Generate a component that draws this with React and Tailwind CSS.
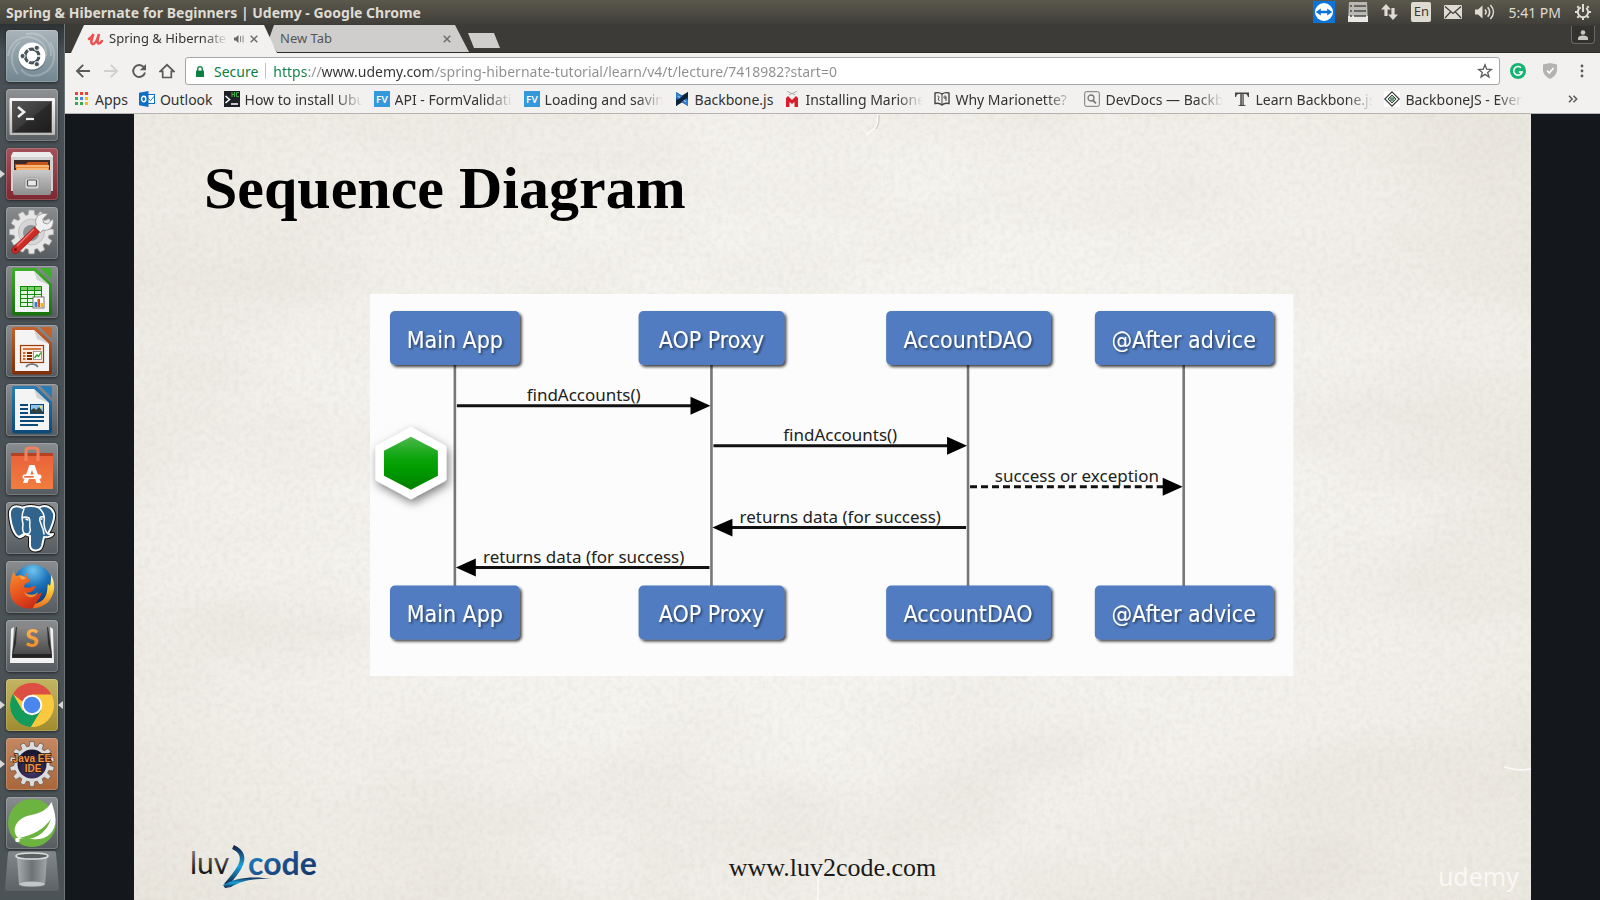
import { useState } from "react";

const cog = (teeth, outer, inner, cx, cy, width = 0.5) => {
  const pts = [];
  const step = (Math.PI * 2) / teeth;
  for (let i = 0; i < teeth; i++) {
    const a = i * step - Math.PI / 2;
    const half = (step * width) / 2;
    [
      [inner, a - half * 1.35],
      [outer, a - half * 0.85],
      [outer, a + half * 0.85],
      [inner, a + half * 1.35],
    ].forEach(([r, t]) => pts.push(`${(cx + r * Math.cos(t)).toFixed(2)},${(cy + r * Math.sin(t)).toFixed(2)}`));
  }
  return pts.join(" ");
};

function DashIcon() {
  return (
    <svg viewBox="0 0 52 52" className="size-full">
      <g fill="none" stroke="#fff" strokeWidth="2" opacity=".22">
        <path d="M2 26C4 12 16 4 27 8c10 3 14 10 13 18" />
        <path d="M44 12c8 13 4 27-8 32-9 4-17 1-21-5" />
        <path d="M12 44C3 34 4 19 14 12" />
        <path d="M20 4c15-3 26 8 25 22" />
      </g>
      <circle cx="26" cy="27" r="14" fill="#35424a" opacity=".35" />
      <circle cx="26" cy="26" r="13.6" fill="#fff" />
      <circle cx="26" cy="26" r="6.9" fill="none" stroke="#4a555b" strokeWidth="3.2" />
      <g stroke="#fff" strokeWidth="1.2">
        <path d="M26 26h-10M26 26l5-8.7M26 26l5 8.7" strokeWidth="1.3" transform="rotate(60 26 26)" />
      </g>
      <circle cx="26" cy="26" r="5.2" fill="#fff" />
      <g fill="#4a555b" stroke="#fff" strokeWidth="1">
        <circle cx="16.6" cy="26" r="2.6" />
        <circle cx="30.8" cy="17.8" r="2.6" />
        <circle cx="30.8" cy="34.2" r="2.6" />
      </g>
    </svg>
  );
}

function TerminalIcon() {
  return (
    <svg viewBox="0 0 52 52" className="size-full">
      <defs>
        <linearGradient id="term-frame" x2="0" y2="1">
          <stop stopColor="#fafafa" />
          <stop offset="1" stopColor="#b9b9b9" />
        </linearGradient>
        <linearGradient id="term-screen" x2="1" y2="1">
          <stop stopColor="#555" />
          <stop offset=".5" stopColor="#3a3a3a" />
          <stop offset=".52" stopColor="#2a2a2a" />
          <stop offset="1" stopColor="#1d1d1d" />
        </linearGradient>
      </defs>
      <rect x="3.5" y="9" width="45.500" height="37" rx="1" fill="url(#term-frame)" />
      <rect x="6" y="12" width="40" height="32" fill="#555" />
      <rect x="7" y="13" width="38" height="30" fill="url(#term-screen)" />
      <path d="M12 18l6 5-6 5" fill="none" stroke="#eee" strokeWidth="2.6" />
      <path d="M20 30h8" stroke="#eee" strokeWidth="2.2" />
    </svg>
  );
}

function FilesIcon() {
  return (
    <svg viewBox="0 0 52 52" className="size-full">
      <defs>
        <linearGradient id="files-body" x2="0" y2="1">
          <stop stopColor="#c9c9c9" />
          <stop offset="1" stopColor="#8e8e8e" />
        </linearGradient>
      </defs>
      <path d="M7 4h37l3 4v5H5V8z" fill="#ececec" />
      <rect x="5" y="9" width="42" height="34" fill="#d2d2d2" />
      <rect x="8" y="12" width="36" height="14" fill="#3b2a26" />
      <path d="M9 16h11l2-2h20v6H9z" fill="#c8551a" />
      <path d="M10 17h33v8H10z" fill="#f0903c" />
      <path d="M10 18h33M11 21h31" stroke="#fbe0b8" strokeWidth="1.2" />
      <path d="M7 22h38v23a2 2 0 0 1-2 2H9a2 2 0 0 1-2-2z" fill="url(#files-body)" />
      <rect x="19" y="30" width="14" height="11" rx="2.500" fill="#d5d5d5" stroke="#8a8a8a" strokeWidth=".6" />
      <rect x="21.500" y="32" width="9" height="6" rx="1" fill="#e9e9e9" stroke="#555" strokeWidth="1.200" />
    </svg>
  );
}

function SettingsIcon() {
  return (
    <svg viewBox="0 0 52 52" className="size-full">
      <polygon points={cog(12, 22, 17.5, 25.5, 25, 0.52)} fill="#e6e6e6" stroke="#b5b5b5" strokeWidth=".7" />
      <circle cx="25.500" cy="25" r="13" fill="#d6d6d6" stroke="#c0c0c0" />
      <circle cx="25" cy="26" r="8" fill="#8f9295" />
      <path
        d="M29 21l5 5 3-3c4 1 9-1 10-6 .6-2 .3-4-.3-5l-5 5-4-1-1-4 5-5c-5-2-11 1-12 6-.3 2 0 3 .6 4z"
        fill="#efefef"
        stroke="#8b8b8b"
        strokeWidth=".8"
      />
      <path d="M28.500 20l5 5L12 45.500c-1.500 1.500-4 1.500-5.300 0s-1.300-3.700.2-5z" fill="#cc2b26" stroke="#8c1512" strokeWidth=".7" />
      <path d="M28 22L11 39" stroke="#f07a70" strokeWidth="1.500" />
      <circle cx="9.500" cy="42.500" r="1.500" fill="#7a0f0d" />
    </svg>
  );
}

function OfficeIcon({ id, dark, light, children }) {
  return (
    <svg viewBox="0 0 52 52" className="size-full">
      <defs>
        <linearGradient id={id} x2="0" y2="1">
          <stop stopColor={light} />
          <stop offset="1" stopColor={dark} />
        </linearGradient>
      </defs>
      <path d="M8 2h22l16 16v29a2.500 2.500 0 0 1-2.500 2.500h-35A2.500 2.500 0 0 1 6 47V4a2 2 0 0 1 2-2z" fill={`url(#${id})`} />
      <path d="M34 2h10a2 2 0 0 1 2 2v10z" fill={light} />
      <path d="M9 5h19l15 14v27H9z" fill="#f4f4f4" />
      <path d="M28 5l15 14-12-5z" fill="#cfd3d3" />
      {children}
    </svg>
  );
}

function CalcIcon() {
  return (
    <OfficeIcon id="calc" dark="#16700c" light="#3fae2c">
      <rect x="14" y="20" width="22" height="21" fill="#118a0a" />
      {[0, 1, 2].map((c) =>
        [0, 1, 2, 3, 4].map((r) => (
          <rect key={`${c}${r}`} x={15 + c * 7} y={21 + r * 4} width="6" height="3" fill={r ? "#e3f6df" : "#7bd06b"} />
        )),
      )}
      <rect x="27" y="31" width="11" height="11" fill="#fff" stroke="#555" strokeWidth=".8" />
      <path d="M28.500 36h2.500v5h-2.500z" fill="#2f7fd0" />
      <path d="M31.500 33H34v8h-2.500z" fill="#d9541e" />
      <path d="M34.500 37H37v4h-2.500z" fill="#f2b41c" />
    </OfficeIcon>
  );
}

function ImpressIcon() {
  return (
    <OfficeIcon id="impress" dark="#7e2f06" light="#c4622e">
      <rect x="14.500" y="20.500" width="23" height="17" fill="#fbe9de" stroke="#9c3c0b" strokeWidth="1.200" />
      <path d="M17 24h18" stroke="#d06a31" strokeWidth="1.800" />
      <path d="M17 28h2.500M17 31h2.500M17 34h2.500" stroke="#d06a31" strokeWidth="1.800" />
      <path d="M21 28h5M21 31h5M21 34h5" stroke="#7e2f06" strokeWidth="1.800" />
      <rect x="27.500" y="26.500" width="8" height="8" fill="#fff" stroke="#777" strokeWidth=".7" />
      <path d="M28.500 33l2.500-3 1.500 1.500 2.500-4" fill="none" stroke="#2f9a2a" strokeWidth="1.300" />
      <path d="M26 38v2M20 42c2-3 4-3 6-3s4 0 6 3" fill="none" stroke="#777" strokeWidth="1.500" />
    </OfficeIcon>
  );
}

function WriterIcon() {
  return (
    <OfficeIcon id="writer" dark="#0a4a78" light="#2b7cb5">
      <path d="M14 21h8M14 25h8M14 29h8M14 33h24M14 37h24M14 41h18" stroke="#0d4a78" strokeWidth="1.900" />
      <rect x="24.500" y="20.500" width="13" height="9" fill="#8cc4ee" stroke="#0d4a78" />
      <path d="M25 29v-3l3-2 2 2 3-3 4 5v1z" fill="#33403c" />
      <circle cx="35" cy="23" r="1.300" fill="#f6e26a" />
    </OfficeIcon>
  );
}

function SoftwareIcon() {
  return (
    <svg viewBox="0 0 52 52" className="size-full">
      <defs>
        <linearGradient id="bag" x2="0" y2="1">
          <stop stopColor="#e9633a" />
          <stop offset="1" stopColor="#f27d3e" />
        </linearGradient>
      </defs>
      <path d="M5 10l4 4h34l4-4v36H5z" fill="url(#bag)" />
      <path d="M5 10h42v3H5z" fill="#b7421f" />
      <path d="M5 13h42v33H5z" fill="url(#bag)" />
      <path d="M20 18V8c0-2 1-3 3-3h6c2 0 3 1 3 3v10" fill="none" stroke="#ef8260" strokeWidth="3" />
      <path d="M17 40l6.500-18h5L35 40h-4.500L26 27l-4.500 13z" fill="#fff" />
      <rect x="16.500" y="31.500" width="19" height="4.600" rx="2" fill="#fff" />
      <rect x="18" y="33" width="10" height="1.800" rx=".8" fill="#ee6f3a" />
    </svg>
  );
}

function PostgresIcon() {
  return (
    <svg viewBox="0 0 52 52" className="size-full">
      <g strokeLinejoin="round" strokeLinecap="round">
        <path
          d="M17 6C9 2 3 5 4 14c1 9 4 19 9 21 3 1 5-2 6-3l5 2v10c1 6 10 6 12 0l2-9c4 1 8-1 9-3-2 .5-4 .3-5-.5 4-6 7-16 6-20-2-7-9-9-15-6-5-2-12-2-16 0z"
          fill="#31648c"
          stroke="#111"
          strokeWidth="4"
        />
        <path
          d="M17 6C9 2 3 5 4 14c1 9 4 19 9 21 3 1 5-2 6-3l5 2v10c1 6 10 6 12 0l2-9c4 1 8-1 9-3-2 .5-4 .3-5-.5 4-6 7-16 6-20-2-7-9-9-15-6-5-2-12-2-16 0z"
          fill="#31648c"
          stroke="#fff"
          strokeWidth="2"
        />
        <path d="M18 7c-3 6-2 11-1 15 0 4-2 7 2 10 4 1 6-2 5-6-1-3 1-7-1-10-2-1-5-1-7 0" fill="none" stroke="#fff" strokeWidth="1.500" />
        <path d="M32 5c5 4 7 10 6 15 0 3 0 7 3 11M38 15c-3-1-5 0-4 4 1 3 2 6 3 8l1 5" fill="none" stroke="#fff" strokeWidth="1.500" />
        <path d="M20 17l2 1M35 17l1 0M14 34c2-1 4-2 4-3" stroke="#fff" strokeWidth="1.600" />
      </g>
    </svg>
  );
}

function FirefoxIcon() {
  return (
    <svg viewBox="0 0 52 52" className="size-full">
      <defs>
        <radialGradient id="fx-globe" cx=".5" cy=".15" r=".9">
          <stop stopColor="#6fc4ee" />
          <stop offset=".45" stopColor="#1d74ba" />
          <stop offset="1" stopColor="#0b2f6b" />
        </radialGradient>
        <linearGradient id="fx-body" x1=".2" y1="0" x2=".7" y2="1">
          <stop stopColor="#f58a2c" />
          <stop offset=".5" stopColor="#e8551f" />
          <stop offset="1" stopColor="#c62a16" />
        </linearGradient>
        <linearGradient id="fx-tail" x2="0" y2="1">
          <stop stopColor="#fff6a8" />
          <stop offset=".4" stopColor="#fbd43b" />
          <stop offset="1" stopColor="#ec6a1c" />
        </linearGradient>
      </defs>
      <circle cx="27" cy="23" r="19.500" fill="url(#fx-globe)" />
      <path
        d="M45 14c5 8 4 19-2 26C36 48 22 50 13 43c13 3 24-1 27-9 2-5 1-8 2-11l2 2c1-4 1-7 1-11z"
        fill="url(#fx-tail)"
      />
      <path
        d="M8 10c0 3 1 4 2 5 3-1 6-1 8 1l3-4c-1 4 0 6 3 6l-1 3c-2 1-5 2-5 5 4 2 6 0 12-1-2 5-6 7-10 7 4 3 10 3 16-1-2 8-8 12-9 16-9 2-18-2-22-11C3 28 4 18 8 10z"
        fill="url(#fx-body)"
      />
      <path d="M13 15c3-1 5 0 7 3-2 0-3 0-4 1" fill="#f8a548" />
      <path d="M18 31c5 4 11 3 14 0-2 6-11 8-14 0z" fill="#f9a03c" opacity=".8" />
    </svg>
  );
}

function SublimeIcon() {
  return (
    <svg viewBox="0 0 52 52" className="size-full">
      <defs>
        <linearGradient id="key-top" x2="0" y2="1">
          <stop stopColor="#8b8b8b" />
          <stop offset="1" stopColor="#4a4a4a" />
        </linearGradient>
        <linearGradient id="key-s" x2="0" y2="1">
          <stop stopColor="#ffc266" />
          <stop offset="1" stopColor="#ee8119" />
        </linearGradient>
      </defs>
      <path d="M5 9l3-2-2 31h40L44 7l3 2 1 34H4z" fill="#f1f1f1" />
      <path d="M10 7h32l4 28v3H6v-3z" fill="#2f2f2f" />
      <path d="M11 6h30l1 18 3 10H7l3-10z" fill="url(#key-top)" />
      <path d="M7 34h38v3H7z" fill="#232323" />
      <text x="26" y="27" textAnchor="middle" fontFamily="Lato, sans-serif" fontWeight="900" fontSize="24" fill="url(#key-s)">
        S
      </text>
    </svg>
  );
}

function ChromeIcon() {
  return (
    <svg viewBox="0 0 52 52" className="size-full">
      <circle cx="26" cy="26" r="22" fill="#fbc93d" />
      <path d="M26 26L7 15A22 22 0 0 1 45.100 15H26z" fill="#dd4b3e" />
      <path d="M7 15a22 22 0 0 0 18 33l10.500-17L26 26l-9.500 5.500z" fill="#149a5b" />
      <path d="M26 15.500h19A22 22 0 0 1 25 48l10-16.500z" fill="#fbc93d" />
      <path d="M26 4a22 22 0 0 1 19.100 11.500H26a10.500 10.500 0 0 0-9.700 7L7 15A22 22 0 0 1 26 4z" fill="#dd4f43" />
      <circle cx="26" cy="26" r="10.200" fill="#fff" />
      <circle cx="26" cy="26" r="8.300" fill="#4a86ee" />
    </svg>
  );
}

function EclipseIcon() {
  return (
    <svg viewBox="0 0 52 52" className="size-full">
      <defs>
        <radialGradient id="jee" cx=".5" cy=".7" r=".6">
          <stop stopColor="#4b3f78" />
          <stop offset="1" stopColor="#1a1730" />
        </radialGradient>
      </defs>
      <polygon points={cog(14, 22.5, 18, 26, 26, 0.5)} fill="#dcdcdc" stroke="#6b5a50" strokeWidth=".8" />
      <circle cx="26" cy="26" r="14.500" fill="url(#jee)" />
      <g fontFamily="'Liberation Sans', sans-serif" fontWeight="700" fontSize="10" textAnchor="middle" fill="#f0964a" stroke="#2b1508" strokeWidth="1.500" paintOrder="stroke">
        <text x="26" y="24">Java EE</text>
        <text x="27" y="34">IDE</text>
      </g>
    </svg>
  );
}

function SpringIcon() {
  return (
    <svg viewBox="0 0 52 52" className="size-full">
      <circle cx="26" cy="26" r="24" fill="#6db33f" />
      <path
        d="M45.500 5c1.500 5 4 11 4 18 0 13-10 21-24 19-5-.7-8-.5-12 0C4 35 9 21 25 18c10-2 16-5 20.500-13z"
        fill="#fff"
      />
      <path d="M13 41c14-3 24-8 32-19-4 12-13 20-25 20z" fill="#6db33f" />
      <circle cx="11.500" cy="43" r="2.300" fill="#fff" />
    </svg>
  );
}

function TrashIcon() {
  return (
    <svg viewBox="0 0 54 40" className="w-[54px]">
      <defs>
        <linearGradient id="trash-tile" x2="0" y2="1">
          <stop stopColor="#83888b" />
          <stop offset="1" stopColor="#5c6265" />
        </linearGradient>
        <linearGradient id="trash-can">
          <stop stopColor="#a9adaf" />
          <stop offset=".5" stopColor="#6d7275" />
          <stop offset="1" stopColor="#a1a5a7" />
        </linearGradient>
      </defs>
      <path d="M5 0h44a2 2 0 0 1 2 2l3 35a3 3 0 0 1-3 3H3a3 3 0 0 1-3-3L3 2a2 2 0 0 1 2-2z" fill="url(#trash-tile)" />
      <path d="M12 6h30l-2 28c-6 3-20 3-26 0z" fill="url(#trash-can)" />
      <ellipse cx="27" cy="33" rx="12.500" ry="2.500" fill="#c3c6c6" />
      <ellipse cx="27" cy="5" rx="16" ry="3" fill="#5c6163" stroke="#dedfdf" strokeWidth="1.500" />
    </svg>
  );
}

const apps = [
  { name: "Search your computer", icon: DashIcon, tile: "from-[#a9b4ba] to-[#738791]" },
  { name: "Terminal", icon: TerminalIcon, tile: "from-[#8f9193] to-[#5a6063]" },
  { name: "Files", icon: FilesIcon, tile: "from-[#a3525c] to-[#7d2731]", running: true },
  { name: "System Settings", icon: SettingsIcon, tile: "from-[#8a8d90] to-[#555b5f]" },
  { name: "LibreOffice Calc", icon: CalcIcon, tile: "from-[#8a8d90] to-[#555b5f]" },
  { name: "LibreOffice Impress", icon: ImpressIcon, tile: "from-[#8a8d90] to-[#555b5f]" },
  { name: "LibreOffice Writer", icon: WriterIcon, tile: "from-[#8a8d90] to-[#555b5f]" },
  { name: "Ubuntu Software", icon: SoftwareIcon, tile: "from-[#8a8d90] to-[#555b5f]" },
  { name: "pgAdmin", icon: PostgresIcon, tile: "from-[#8a8d90] to-[#555b5f]" },
  { name: "Firefox", icon: FirefoxIcon, tile: "from-[#8a8d90] to-[#555b5f]" },
  { name: "Sublime Text", icon: SublimeIcon, tile: "from-[#8a8d90] to-[#555b5f]" },
  { name: "Google Chrome", icon: ChromeIcon, tile: "from-[#c3b562] to-[#a08c2e]", running: true, focused: true },
  { name: "Eclipse", icon: EclipseIcon, tile: "from-[#c4875f] to-[#a8663a]", running: true },
  { name: "Spring Tool Suite", icon: SpringIcon, tile: "from-[#8a8d90] to-[#555b5f]" },
];

function Launcher() {
  return (
    <nav aria-label="Launcher" className="flex w-[65px] shrink-0 flex-col items-center gap-0.5 border-r border-[#6f7678] bg-linear-to-b from-[#2d3234] via-[#485055] via-3% to-[#4b5357] pt-1.5 pr-px">
      <ul className="flex w-full flex-col gap-[7px]">
        {apps.map(({ name, icon: Icon, tile, running, focused }) => (
          <li key={name} className="relative flex justify-center">
            {running && (
              <span className="absolute top-1/2 left-0 -translate-y-1/2 border-y-4 border-l-5 border-y-transparent border-l-[#d8d8d8]" />
            )}
            <button
              type="button"
              aria-label={name}
              className={`size-[52px] rounded-[4px] bg-linear-to-b shadow-[0_1px_3px_#0008,inset_0_0_0_1px_#ffffff30] ${tile}`}
            >
              <Icon />
            </button>
            {focused && (
              <span className="absolute top-1/2 right-0 -translate-y-1/2 border-y-4 border-r-5 border-y-transparent border-r-[#d8d8d8]" />
            )}
          </li>
        ))}
      </ul>
      <button type="button" aria-label="Trash">
        <TrashIcon />
      </button>
    </nav>
  );
}

function TopPanel() {
  return (
    <header className="flex h-6 items-center justify-between bg-linear-to-b from-[#5b584c] to-[#403f3a] pr-2 pl-1.5 text-[#dfdbd2]">
      <h1 className="text-[14px] font-bold whitespace-nowrap">Spring &amp; Hibernate for Beginners | Udemy - Google Chrome</h1>
      <div className="flex items-center gap-[13px]">
        <svg viewBox="0 0 22 22" className="size-[22px]">
          <rect width="22" height="22" fill="#0b74d8" />
          <circle cx="11" cy="11" r="9" fill="#fff" />
          <path d="M2.800 11l5-3.600v2.400h6.400V7.400l5 3.600-5 3.600v-2.400H7.800v2.400z" fill="#0b74d8" />
        </svg>
        <svg viewBox="0 0 20 20" className="size-5">
          <path d="M1 0h18l1 20H0z" fill="#b9b8b4" />
          <path d="M0 14h20v6H0z" fill="#e9e8e4" />
          <path d="M2 4h2M6 4h12M2 9h2M6 9h12M2 14h2M6 14h12" stroke="#4a4a46" strokeWidth="1.400" />
        </svg>
        <svg viewBox="0 0 17 18" className="h-[18px] w-[17px]" fill="currentColor">
          <path d="M5 1L0 6.500h3.400V13h3.200V6.500H10zM12 17l5-5.500h-3.400V5h-3.200v6.500H7z" />
        </svg>
        <span className="flex h-5 w-5 items-center justify-center rounded-[2px] bg-[#dfdbd2] text-[13px] text-[#3c3b37]">En</span>
        <svg viewBox="0 0 18 14" className="h-3.5 w-[18px]">
          <rect width="18" height="14" rx="1" fill="#dfdbd2" />
          <path d="M1 1.500l8 7 8-7M1 13l5.500-6M17 13l-5.500-6" fill="none" stroke="#3c3b37" strokeWidth="1.200" />
        </svg>
        <svg viewBox="0 0 20 18" className="h-[18px] w-5">
          <path d="M0 6.500h3L7.500 2.500v13L3 11.500H0z" fill="#dfdbd2" />
          <path d="M10 6.500c1.300 1.500 1.300 3.500 0 5M12.700 4.300c2.500 3 2.500 6.400 0 9.400M15.400 2c4 4.300 4 9.700 0 14" fill="none" stroke="#dfdbd2" strokeWidth="1.600" />
        </svg>
        <time className="text-[14px] whitespace-nowrap">5:41 PM</time>
        <svg viewBox="0 0 18 18" className="size-[18px]" fill="none" stroke="#dfdbd2">
          <circle cx="9" cy="9" r="5.200" strokeWidth="2" strokeDasharray="27 5.700" strokeDashoffset="-27.300" />
          <path d="M9 1v8" strokeWidth="2" />
          <path d="M3.300 3.300l1.500 1.500M14.700 3.300l-1.500 1.500M1 9h2.500M14.500 9H17M3.300 14.700l1.500-1.500M14.700 14.700l-1.500-1.500M9 14.500V17" strokeWidth="2" />
        </svg>
      </div>
    </header>
  );
}

function TabClose({ label }) {
  return (
    <button type="button" aria-label={label} className="text-[#6e6e6e]">
      <svg viewBox="0 0 8 8" className="size-2">
        <path d="M.7.7l6.600 6.600M7.300.7L.7 7.300" stroke="currentColor" strokeWidth="1.500" />
      </svg>
    </button>
  );
}

function TabStrip() {
  return (
    <div className="flex h-[29px] items-end border-b border-[#2b2a27] bg-[#3c3b37] pl-1.5">
      <div role="tablist" className="flex">
        <div
          role="tab"
          aria-selected="true"
          className="z-10 -mb-px flex h-7 w-[206px] items-center gap-1.5 bg-[#f2f1f0] pr-[19px] pb-px pl-4 text-[13px] text-[#333] [clip-path:polygon(0_100%,13px_0,193px_0,100%_100%)]"
        >
          <svg viewBox="0 0 16 14" className="h-3.5 w-4 shrink-0">
            <path d="M2 7c2-1 3.500-3 4.500-5C5 6 3 11.500 5.500 12s5-5 6.500-10c-1 4-2.500 9-.5 9.500 1.500.300 2.500-1 3.500-2.500" fill="none" stroke="#ec5252" strokeWidth="2.600" strokeLinecap="round" />
          </svg>
          <span className="flex-1 overflow-hidden whitespace-nowrap [mask-image:linear-gradient(to_right,#000_80%,transparent)]">
            Spring &amp; Hibernate
          </span>
          <svg viewBox="0 0 10 8" className="h-2 w-2.5 shrink-0">
            <path d="M0 2.500h1.800L4.500 0v8L1.800 5.500H0z" fill="#666" />
            <path d="M6.500 1v6M9 .5v7" stroke="#888" />
          </svg>
          <TabClose label="Close Spring & Hibernate" />
        </div>
        <div
          role="tab"
          aria-selected="false"
          className="-ml-2 flex h-[27px] w-[200px] items-center justify-between bg-[#cfcecc] pr-[18px] pl-[11px] text-[13px] text-[#555] [clip-path:polygon(5px_0,186px_0,100%_100%,8px_100%,0_14px)]"
        >
          New Tab
          <TabClose label="Close New Tab" />
        </div>
      </div>
      <button
        type="button"
        aria-label="New tab"
        className="mb-1 -ml-px h-[15px] w-8 bg-[#cfcecc] [clip-path:polygon(0_0,26px_0,100%_100%,6px_100%)]"
      />
      <button
        type="button"
        aria-label="Profile"
        className="mr-[5px] mb-2 ml-auto flex h-[18px] w-6 items-center justify-center rounded-b-[4px] border border-t-0 border-[#6a6963] bg-[#33322f] text-[#c9c6be]"
      >
        <svg viewBox="0 0 10 10" className="size-2.5" fill="currentColor">
          <circle cx="5" cy="2.500" r="2.300" />
          <path d="M0 10V8c0-1.500 2-2.500 5-2.500s5 1 5 2.500v2z" />
        </svg>
      </button>
    </div>
  );
}

function Toolbar() {
  const [url, setUrl] = useState("https://www.udemy.com/spring-hibernate-tutorial/learn/v4/t/lecture/7418982?start=0");
  return (
    <div className="flex h-9 items-center bg-[#f2f1f0] px-2.5 text-[#5a5a5a]">
      <div className="flex gap-3">
        <button type="button" aria-label="Back">
          <svg viewBox="0 0 16 16" className="size-4" fill="none" stroke="currentColor" strokeWidth="1.900">
            <path d="M15 8H2.500M8.200 1.800L2 8l6.200 6.200" />
          </svg>
        </button>
        <button type="button" aria-label="Forward" disabled className="text-[#cfcfcf]">
          <svg viewBox="0 0 16 16" className="size-4" fill="none" stroke="currentColor" strokeWidth="1.900">
            <path d="M1 8h12.500M7.800 1.800L14 8l-6.200 6.200" />
          </svg>
        </button>
        <button type="button" aria-label="Reload">
          <svg viewBox="0 0 16 16" className="size-4" fill="none" stroke="currentColor" strokeWidth="1.900">
            <path d="M12.800 4.200A6 6 0 1 0 14 9.500" />
            <path d="M15 1v6.200H8.800z" fill="currentColor" stroke="none" />
          </svg>
        </button>
        <button type="button" aria-label="Home">
          <svg viewBox="0 0 16 16" className="size-4" fill="none" stroke="currentColor" strokeWidth="1.700">
            <path d="M1.200 8.300L8 1.800l6.800 6.500h-2.500V14.500H3.700V8.300z" />
          </svg>
        </button>
      </div>
      <form className="ml-2.5 flex h-7 flex-1 items-center rounded-[3px] border border-[#a6a6a6] bg-white pr-1.5 pl-2.5 text-[14px]" onSubmit={(e) => e.preventDefault()}>
        <svg viewBox="0 0 8 11" className="h-[11px] w-2">
          <rect y="4.500" width="8" height="6.500" rx=".6" fill="#0b8043" />
          <path d="M1.700 5V3a2.300 2.300 0 0 1 4.600 0v2" fill="none" stroke="#0b8043" strokeWidth="1.300" />
        </svg>
        <label htmlFor="address" className="ml-2.5 text-[#0b8043]">Secure</label>
        <span className="mx-[7px] h-4 w-px bg-[#c4c4c4]" />
        <input
          id="address"
          value={url}
          onChange={(e) => setUrl(e.target.value)}
          className="min-w-0 flex-1 bg-clip-text text-transparent caret-[#333] outline-none [background-image:linear-gradient(to_right,#0b8043_34px,#8e8e8e_34px,#8e8e8e_48px,#333_48px,#333_159px,#8e8e8e_159px)]"
        />
        <button type="button" aria-label="Bookmark this page">
          <svg viewBox="0 0 16 16" className="size-4" fill="none" stroke="#5a5a5a" strokeWidth="1.300">
            <path d="M8 1.800l1.700 4.400 4.700.300-3.700 2.900 1.300 4.600L8 11.400 4 14l1.300-4.600L1.600 6.500l4.700-.3z" />
          </svg>
        </button>
      </form>
      <div className="ml-2.5 flex items-center gap-4">
        <button type="button" aria-label="Grammarly">
          <svg viewBox="0 0 16 16" className="size-4">
            <circle cx="8" cy="8" r="8" fill="#15b371" />
            <path d="M11 4.700A4.300 4.300 0 1 0 12.200 9H8.800" fill="none" stroke="#fff" strokeWidth="1.500" />
          </svg>
        </button>
        <button type="button" aria-label="AdGuard">
          <svg viewBox="0 0 16 16" className="size-4">
            <path d="M8 0l7 1.500V7c0 4-3 7-7 9-4-2-7-5-7-9V1.500z" fill="#b3b3b3" />
            <path d="M5 7.500l2.300 2.500L11.500 5" fill="none" stroke="#fff" strokeWidth="1.600" />
          </svg>
        </button>
        <button type="button" aria-label="Menu">
          <svg viewBox="0 0 16 16" className="size-4" fill="#5a5a5a">
            <circle cx="8" cy="3" r="1.400" />
            <circle cx="8" cy="8" r="1.400" />
            <circle cx="8" cy="13" r="1.400" />
          </svg>
        </button>
      </div>
    </div>
  );
}

const AppsGrid = () => (
  <svg viewBox="0 0 16 16" className="size-4 shrink-0">
    {["#ea4335", "#ea4335", "#ea4335", "#34a853", "#4285f4", "#fbbc05", "#34a853", "#34a853", "#fbbc05"].map((c, i) => (
      <rect key={i} x={1 + (i % 3) * 5} y={1 + Math.floor(i / 3) * 5} width="3" height="3" fill={c} />
    ))}
  </svg>
);
const Outlook = () => (
  <svg viewBox="0 0 16 16" className="size-4 shrink-0">
    <rect x="8" y="3.500" width="7.500" height="9" fill="#fff" stroke="#0f6fc5" />
    <path d="M8.500 7l3 2.500L15.500 5" fill="none" stroke="#0f6fc5" />
    <path d="M0 1.800L9.500 0v16L0 14.200z" fill="#0f6fc5" />
    <ellipse cx="4.700" cy="8" rx="2.100" ry="2.700" fill="none" stroke="#fff" strokeWidth="1.500" />
  </svg>
);
const Howto = () => (
  <svg viewBox="0 0 16 16" className="size-4 shrink-0">
    <rect width="16" height="16" fill="#1d2126" />
    <path d="M1.500 5l4 3.500-4 3.500M7 13h7" fill="none" stroke="#fff" strokeWidth="1.600" />
    <path d="M8 1v5M8 3.500h2.500M10.500 1v5M15 1.600h-2.500v4H15" fill="none" stroke="#3fae49" />
  </svg>
);
const FormValidation = () => (
  <svg viewBox="0 0 16 16" className="size-4 shrink-0">
    <rect width="16" height="16" fill="#3498db" />
    <text x="8" y="12" textAnchor="middle" fontFamily="Lato, sans-serif" fontWeight="700" fontSize="9" fill="#fff">FV</text>
  </svg>
);
const Backbone = () => (
  <svg viewBox="0 0 16 16" className="size-4 shrink-0">
    <path d="M2 1l6 3.500L14 1v14l-6-3.500L2 15z" fill="#153e6b" />
    <path d="M2 1l12 8v6L2 7z" fill="#2f7fd0" />
    <path d="M14 1v5L2 15v-5z" fill="#0f2238" />
    <path d="M4.500 4.500V6L6.500 7zM11.500 11.500V10L9.500 9z" fill="#fff" />
  </svg>
);
const Marionette = () => (
  <svg viewBox="0 0 16 16" className="size-4 shrink-0">
    <path d="M3 0l5 3 5-3M5 4l3-2 3 2" fill="none" stroke="#aaa" />
    <path d="M2 16V7l2-2 4 4 4-4 2 2v9h-3.500v-5L8 13l-2.500-2v5z" fill="#d5202b" />
  </svg>
);
const Book = () => (
  <svg viewBox="0 0 16 16" className="size-4 shrink-0" fill="none" stroke="#444" strokeWidth="1.400">
    <path d="M8 3C6 1.500 3 1.500 1 2v10.500c2-.5 5-.5 7 1.500 2-2 5-2 7-1.500V2c-2-.5-5-.5-7 1z" />
    <path d="M8 3v11M3.500 5c2 0 2 2 .5 3l1.500 2M12 10V6c0-1.500-2-1.500-2 .3s2 1.200 2 0" strokeWidth="1" />
  </svg>
);
const DevDocs = () => (
  <svg viewBox="0 0 16 16" className="size-4 shrink-0" fill="none" stroke="#777">
    <rect x=".7" y=".7" width="14.600" height="14.600" rx="1.500" />
    <circle cx="7" cy="7" r="3" strokeWidth="1.300" />
    <path d="M9 9.300l3 3" strokeWidth="1.800" />
  </svg>
);
const LearnT = () => (
  <svg viewBox="0 0 16 16" className="size-4 shrink-0">
    <path d="M1 1.500h14V6h-1c-.5-2-1.200-3-3-3H9.700v10c0 1 .5 1.300 2 1.500v.5H4.300v-.5c1.500-.2 2-.5 2-1.500V3H5C3.200 3 2.500 4 2 6H1z" fill="#444" />
    <path d="M8.200 3v11" stroke="#ccc" strokeWidth=".8" />
  </svg>
);
const Diamond = () => (
  <svg viewBox="0 0 16 16" className="size-4 shrink-0">
    <rect width="16" height="16" fill="#fff" />
    <path d="M8 .8L15.200 8 8 15.200.8 8z" fill="none" stroke="#333" strokeWidth="1.100" />
    <path d="M8 4L12 8 8 12 4 8z" fill="#a3cbaa" stroke="#333" strokeWidth=".9" />
    <path d="M6 7.200h4M6 9h4" stroke="#354" strokeWidth=".8" />
  </svg>
);

const bookmarks = [
  { icon: AppsGrid, text: "Apps" },
  { icon: Outlook, text: "Outlook" },
  { icon: Howto, text: "How to install Ubu", fade: true },
  { icon: FormValidation, text: "API - FormValidati", fade: true },
  { icon: FormValidation, text: "Loading and saving", fade: true },
  { icon: Backbone, text: "Backbone.js" },
  { icon: Marionette, text: "Installing Marionet", fade: true },
  { icon: Book, text: "Why Marionette? |", fade: true },
  { icon: DevDocs, text: "DevDocs — Backb", fade: true },
  { icon: LearnT, text: "Learn Backbone.js", fade: true },
  { icon: Diamond, text: "BackboneJS - Even", fade: true },
];

function BookmarksBar() {
  return (
    <div className="flex h-[25px] items-center border-b border-[#b6b4b1] bg-[#f2f1f0] pr-[22px] pl-[9px] pb-1 text-[14px] text-[#333]">
      <nav aria-label="Bookmarks" className="flex flex-1 gap-[11px]">
        {bookmarks.map(({ icon: Icon, text, fade }) => (
          <a key={text} href="#" className="flex h-5 items-center gap-[5px] whitespace-nowrap">
            <Icon />
            <span className={fade ? "w-[118px] overflow-hidden [mask-image:linear-gradient(to_right,#000_78%,transparent)]" : ""}>{text}</span>
          </a>
        ))}
      </nav>
      <button type="button" aria-label="More bookmarks">
        <svg viewBox="0 0 10 8" className="h-2 w-2.5" fill="none" stroke="#5a5a5a" strokeWidth="1.500">
          <path d="M1 .8L4.200 4 1 7.200M5.500.8L8.700 4 5.500 7.200" />
        </svg>
      </button>
    </div>
  );
}

const actors = [
  { name: "Main App", x: 20, w: 130, line: 85 },
  { name: "AOP Proxy", x: 269, w: 146, line: 342 },
  { name: "AccountDAO", x: 517, w: 165, line: 599 },
  { name: "@After advice", x: 726, w: 179, line: 815 },
];

const messages = [
  { text: "findAccounts()", from: 85, to: 342, y: 112, center: 214 },
  { text: "findAccounts()", from: 342, to: 599, y: 152, center: 471 },
  { text: "success or exception", from: 599, to: 815, y: 193, center: 708, dashed: true },
  { text: "returns data (for success)", from: 599, to: 342, y: 234, center: 471 },
  { text: "returns data (for success)", from: 342, to: 85, y: 274, center: 214 },
];

function SequenceDiagram() {
  return (
    <svg viewBox="0 0 925 383" role="img" aria-label="Sequence diagram" className="block w-full" fontFamily="'Noto Sans', sans-serif">
      <defs>
        <filter id="box-shadow" x="-10%" y="-20%" width="125%" height="150%">
          <feDropShadow dx="2" dy="2" stdDeviation="1.500" floodColor="#000" floodOpacity=".75" />
        </filter>
        <filter id="hex-shadow" x="-30%" y="-30%" width="170%" height="170%">
          <feDropShadow dx="2" dy="4" stdDeviation="5" floodColor="#000" floodOpacity=".5" />
        </filter>
        <filter id="label-shadow">
          <feDropShadow dx="1.500" dy="1.500" stdDeviation=".8" floodColor="#000" floodOpacity=".55" />
        </filter>
        <linearGradient id="hex-fill" x2="0" y2="1">
          <stop stopColor="#4cb84c" />
          <stop offset=".42" stopColor="#0aa40a" />
          <stop offset=".6" stopColor="#009c00" />
          <stop offset="1" stopColor="#008000" />
        </linearGradient>
      </defs>
      <rect width="925" height="383" fill="#fcfcfc" />
      {actors.map((a) => (
        <path key={a.name} d={`M${a.line} 70V293`} stroke="#777" strokeWidth="2.600" />
      ))}
      {[17, 292].map((y) =>
        actors.map((a) => (
          <g key={a.name + y}>
            <rect x={a.x} y={y} width={a.w} height="54" rx="5" fill="#517bc1" filter="url(#box-shadow)" />
            <text x={a.line} y={y + 37} textAnchor="middle" fontFamily="'DejaVu Sans Condensed', 'Noto Sans', sans-serif" fontSize="23" fill="#fff" filter="url(#label-shadow)">
              {a.name}
            </text>
          </g>
        )),
      )}
      {messages.map((m) => {
        const dir = m.to > m.from ? 1 : -1;
        const tip = m.to - dir * 1;
        return (
          <g key={m.y}>
            <path d={`M${m.from + dir * 2} ${m.y}H${tip - dir * 18}`} stroke="#111" strokeWidth="3" strokeDasharray={m.dashed ? "7 4" : undefined} />
            <path d={`M${tip} ${m.y}L${tip - dir * 20} ${m.y - 9}V${m.y + 9}z`} fill="#000" />
            <text x={m.center} y={m.y - 5} textAnchor="middle" fontSize="17" fill="#222">
              {m.text}
            </text>
          </g>
        );
      })}
      <path d="M41 136L74 154V185L41 203L8 185V154Z" fill="#fff" stroke="#fff" strokeWidth="5" strokeLinejoin="round" filter="url(#hex-shadow)" />
      <path d="M41 143L68 157V182L41 196L14 182V157Z" fill="url(#hex-fill)" />
    </svg>
  );
}

function Luv2CodeLogo() {
  return (
    <svg viewBox="0 0 130 46" role="img" aria-label="luv2code" className="h-[46px] w-[130px]">
      <defs>
        <linearGradient id="luv" x2="0" y2="1">
          <stop stopColor="#999" />
          <stop offset=".7" stopColor="#222" />
          <stop offset="1" stopColor="#000" />
        </linearGradient>
        <linearGradient id="two" x2="0" y2="1">
          <stop stopColor="#14284f" />
          <stop offset=".5" stopColor="#1aa3dd" />
          <stop offset="1" stopColor="#101d40" />
        </linearGradient>
        <linearGradient id="code" x2="1" y2="1">
          <stop stopColor="#1aa0db" />
          <stop offset=".5" stopColor="#1d4f8c" />
          <stop offset="1" stopColor="#123262" />
        </linearGradient>
      </defs>
      <text x="0" y="30" fontFamily="Lato, sans-serif" fontSize="30" fill="url(#luv)">luv</text>
      <path d="M43 3C52 7 55 14 49 24c-4 7-9 12-13 17" fill="none" stroke="url(#two)" strokeWidth="4.500" />
      <path d="M33 41c14-8 30-9 50-6-20-1-32 2-42 8l-6 1z" fill="url(#two)" />
      <text x="58" y="31" fontFamily="Lato, sans-serif" fontWeight="700" fontSize="32" fill="url(#code)">code</text>
    </svg>
  );
}

function PaperTexture() {
  return (
    <svg aria-hidden="true" className="pointer-events-none absolute inset-0 size-full">
      <filter id="paper-grain" x="0" y="0" width="100%" height="100%">
        <feTurbulence type="fractalNoise" baseFrequency=".18" numOctaves="3" seed="4" />
        <feColorMatrix values="0 0 0 0 .45  0 0 0 0 .42  0 0 0 0 .35  .5 0 0 0 -.19" />
      </filter>
      <filter id="paper-cloud" x="0" y="0" width="100%" height="100%">
        <feTurbulence type="fractalNoise" baseFrequency=".004 .008" numOctaves="3" seed="9" />
        <feColorMatrix values="0 0 0 0 .55  0 0 0 0 .52  0 0 0 0 .44  .6 0 0 0 -.24" />
      </filter>
      <rect width="100%" height="100%" filter="url(#paper-grain)" opacity=".5" />
      <rect width="100%" height="100%" filter="url(#paper-cloud)" opacity=".6" />
      <g fill="none" stroke="#fff" strokeWidth="1.500" opacity=".8">
        <path d="M744 0c-1 6 0 10-3 14l-9 7" />
        <path d="M684 786v-20l3-12" />
        <path d="M1370 653l14 3 13-1" />
      </g>
      <path d="M745 1c0 6 0 9-3 14" fill="none" stroke="#b9b4a8" strokeWidth=".8" />
    </svg>
  );
}

function Slide() {
  return (
    <article className="relative flex flex-1 flex-col bg-[radial-gradient(ellipse_at_50%_45%,#f8f7f3_0%,#f5f3ee_50%,#ebe8e0_100%)]">
      <PaperTexture />
      <h2 className="relative pt-[40px] pl-[70px] font-['Liberation_Serif',serif] text-[60px] leading-[68px] font-bold text-black">Sequence Diagram</h2>
      <div className="relative mt-[72px] pr-[17%] pl-[236px]">
        <SequenceDiagram />
      </div>
      <footer className="relative mt-auto grid grid-cols-3 items-center pb-2.5">
        <div className="pl-14">
          <Luv2CodeLogo />
        </div>
        <a href="#" className="text-center font-['Liberation_Serif',serif] text-[26px] text-[#1a1a1a]">www.luv2code.com</a>
        <span className="self-end pr-3 text-right text-[25px] leading-7 text-white/70">udemy</span>
      </footer>
    </article>
  );
}

export default function App() {
  return (
    <div className="flex min-h-screen flex-col font-['Noto_Sans',sans-serif]">
      <TopPanel />
      <div className="flex flex-1">
        <Launcher />
        <div className="flex min-w-0 flex-1 flex-col">
          <TabStrip />
          <Toolbar />
          <BookmarksBar />
          <main className="flex flex-1 justify-center bg-[#14171c] px-[69px]">
            <Slide />
          </main>
        </div>
      </div>
    </div>
  );
}
